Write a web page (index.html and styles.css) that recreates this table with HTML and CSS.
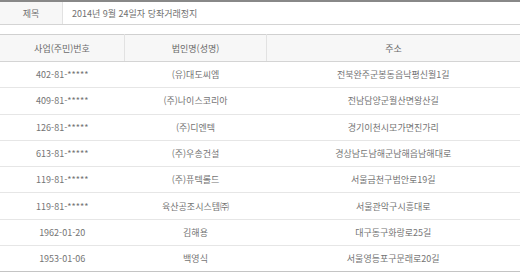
FILE: index.html
```html
<!DOCTYPE html>
<html lang="ko">
<head>
<meta charset="utf-8">
<link rel="stylesheet" href="styles.css">
</head>
<body>
<div class="page">
  <div class="title-row">
    <div class="title-label">제목</div>
    <div class="title-value">2014년 9월 24일자 당좌거래정지</div>
  </div>
  <table class="list">
    <thead>
      <tr>
        <th class="c1">사업(주민)번호</th>
        <th class="c2">법인명(성명)</th>
        <th class="c3">주소</th>
      </tr>
    </thead>
    <tbody>
      <tr><td>402-81-*****</td><td>(유)대도씨엠</td><td>전북완주군봉동읍낙평신월1길</td></tr>
      <tr><td>409-81-*****</td><td>(주)나이스코리아</td><td>전남담양군월산면왕산길</td></tr>
      <tr><td>126-81-*****</td><td>(주)디엔텍</td><td>경기이천시모가면진가리</td></tr>
      <tr><td>613-81-*****</td><td>(주)우송건설</td><td>경상남도남해군남해읍남해대로</td></tr>
      <tr><td>119-81-*****</td><td>(주)퓨텍롤드</td><td>서울금천구범안로19길</td></tr>
      <tr><td>119-81-*****</td><td>육산공조시스템㈜</td><td>서울관악구시흥대로</td></tr>
      <tr><td>1962-01-20</td><td>김해용</td><td>대구동구화랑로25길</td></tr>
      <tr><td>1953-01-06</td><td>백영식</td><td>서울영등포구문래로20길</td></tr>
    </tbody>
  </table>
</div>
</body>
</html>
```

FILE: styles.css
```css
html, body {
  margin: 0;
  padding: 0;
  background: #fff;
}
body {
  font-family: "Noto Sans CJK KR", "Noto Sans", sans-serif;
  font-size: 9px;
  color: #707070;
}
.page {
  width: 520px;
}
.title-row {
  display: flex;
  border-top: 2px solid #888;
  border-bottom: 1px solid #d4d4d4;
  height: 22px;
  align-items: stretch;
}
.title-label {
  width: 62px;
  background: #f7f7f7;
  border-right: 1px solid #e2e2e2;
  display: flex;
  align-items: center;
  justify-content: center;
}
.title-value {
  flex: 1;
  display: flex;
  align-items: center;
  padding-left: 9px;
}
.list {
  margin-top: 9px;
  width: 520px;
  border-collapse: collapse;
  table-layout: fixed;
  border-top: 1px solid #d0d0d0;
  border-bottom: 1px solid #c4c4c4;
}
.list th {
  height: 26px;
  padding: 0;
  background: #f7f7f7;
  font-weight: normal;
  color: #6a6a6a;
  border-bottom: 1px solid #d4d4d4;
  border-left: 1px solid #e2e2e2;
  text-align: center;
}
.list th.c1 { width: 124px; border-left: none; }
.list th.c2 { width: 141px; }
.list td {
  height: 25.3px;
  padding: 0;
  text-align: center;
  color: #747474;
  border-bottom: 1px solid #e6e6e6;
}
.list tbody tr:last-child td {
  border-bottom: 1px solid #c4c4c4;
}
```
